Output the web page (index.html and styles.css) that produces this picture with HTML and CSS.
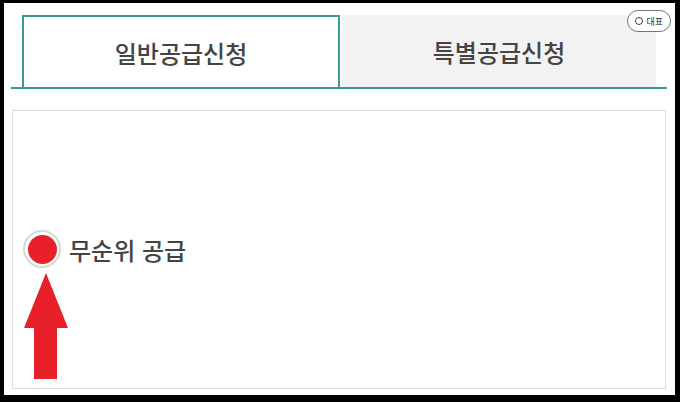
FILE: index.html
```html
<!DOCTYPE html>
<html lang="ko">
<head>
  <meta charset="UTF-8">
  <title>청약신청</title>
  <meta name="viewport" content="width=device-width, initial-scale=1.0">
  <link rel="stylesheet" href="styles.css">
</head>
<body>
  <div class="frame">
    <span class="badge"><span class="badge-dot"></span>대표</span>
    <div class="tabs">
      <div class="tab active">일반공급신청</div>
      <div class="tab">특별공급신청</div>
    </div>
    <div class="panel">
      <label class="option">
        <span class="radio"><span class="radio-fill"></span></span>
        <span class="option-text">무순위 공급</span>
      </label>
      <!-- pointer arrow -->
      <svg class="arrow" width="46" height="108" viewBox="0 0 46 108">
        <polygon points="23,0 45,55 34,55 34,106 11,106 11,55 1,55" fill="#e8202a"/>
      </svg>
    </div>
  </div>
</body>
</html>
```

FILE: styles.css
```css
body {
  margin: 0;
  background: #000;
  font-family: "Noto Sans CJK KR", "Noto Sans", sans-serif;
}
.frame {
  position: relative;
  box-sizing: border-box;
  width: 680px;
  height: 402px;
  background: #fff;
  border-style: solid;
  border-color: #000;
  border-width: 3px 5px 7px 4px;
  padding: 12px 8px 0 7px;
}
.badge {
  position: absolute;
  top: 7px;
  right: 4px;
  box-sizing: border-box;
  height: 22px;
  padding: 0 7px;
  border: 1px solid #777;
  border-radius: 11px;
  background: #fff;
  display: flex;
  align-items: center;
  gap: 3px;
  font-size: 9px;
  color: #333;
}
.badge-dot {
  width: 6px;
  height: 6px;
  border: 1px solid #444;
  border-radius: 50%;
}
.tabs {
  display: flex;
  gap: 2px;
  padding: 0 11px;
  border-bottom: 2px solid #3a9993;
}
.tab {
  flex: 1;
  height: 72px;
  display: flex;
  align-items: center;
  justify-content: center;
  background: #f2f2f2;
  font-size: 24px;
  font-weight: 500;
  color: #444;
}
.tab.active {
  box-sizing: border-box;
  background: #fff;
  border: 2px solid #3a9993;
  border-bottom: none;
}
.panel {
  position: relative;
  margin: 21px 1px 0 1px;
  height: 279px;
  box-sizing: border-box;
  border: 1px solid #ddd;
  padding-top: 119px;
  padding-left: 10px;
}
.option {
  display: flex;
  align-items: center;
  gap: 8px;
}
.radio {
  box-sizing: border-box;
  width: 38px;
  height: 38px;
  border: 2px solid #d6d6d6;
  border-radius: 50%;
  display: flex;
  align-items: center;
  justify-content: center;
}
.radio-fill {
  width: 29px;
  height: 29px;
  border-radius: 50%;
  background: #e8202a;
}
.option-text {
  font-size: 24px;
  font-weight: 500;
  color: #444;
}
.arrow {
  position: absolute;
  left: 10px;
  top: 162px;
}
```
